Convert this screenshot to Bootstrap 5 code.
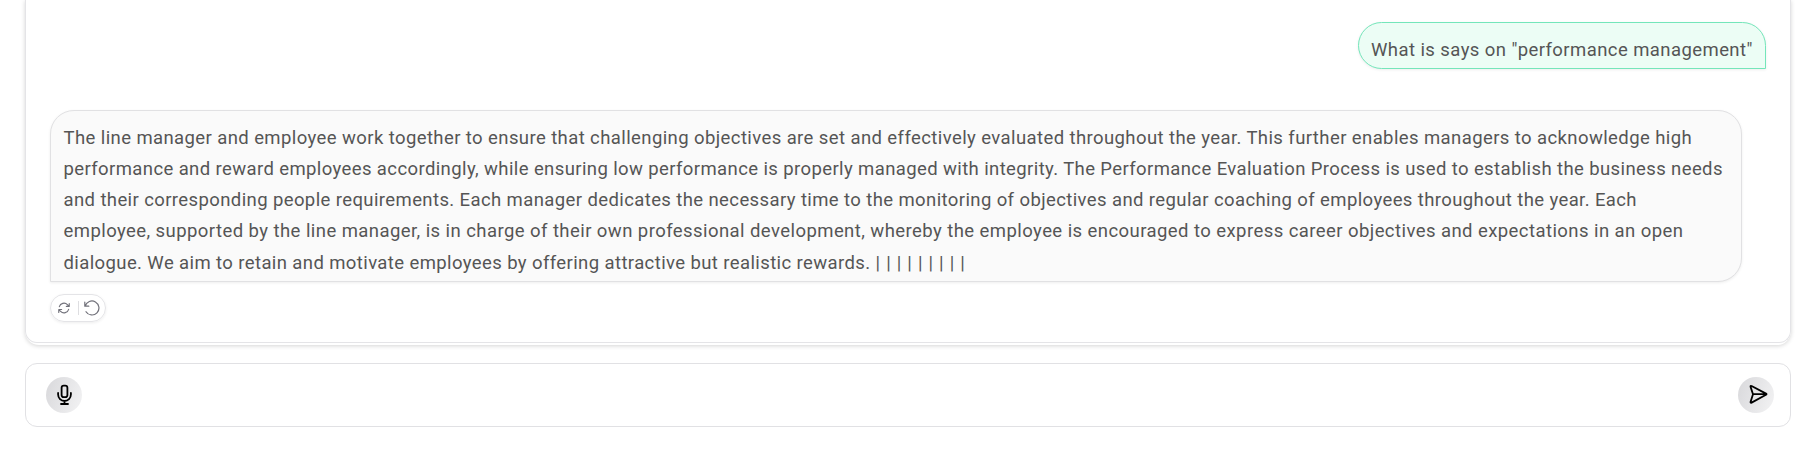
<!DOCTYPE html>
<html lang="en">
<head>
<meta charset="utf-8">
<meta name="viewport" content="width=device-width, initial-scale=1">
<title>Chat</title>
<link href="https://cdn.jsdelivr.net/npm/bootstrap@5.3.0/dist/css/bootstrap.min.css" rel="stylesheet">
<style>
body{font-family:Roboto,"Liberation Sans",sans-serif;color:#555;background:#fff;height:464px;overflow:hidden}
.shell{padding:0 17px 0 25px}
.chat-panel{height:345px;padding-bottom:2px;border-radius:0 0 14px 14px;box-shadow:0 1px 4px rgba(0,0,0,.17)}
.chat-scroll{height:343px;border:1px solid #e4e4e7;border-top:0;border-radius:0 0 12px 12px;padding:22px 24px 0}
.bubble{border:1px solid #e1e1e3;background:#fafafa;font-size:18.5px;line-height:31.25px;box-shadow:0 1px 3px rgba(0,0,0,.07);white-space:nowrap}
.bubble-user{width:408px;height:47px;border-color:#74e6ba;background:#ecfdf5;border-radius:24px 24px 0 24px;padding:11.5px 12px 0;letter-spacing:.425px}
.bubble-bot{width:1692px;height:172px;border-radius:24px 24px 24px 0;padding:11.5px 12.5px 0;margin-top:41px}
.line-a{letter-spacing:.404px}
.line-b{letter-spacing:.391px}
.line-c{letter-spacing:.395px}
.line-d{letter-spacing:.43px}
.line-e{letter-spacing:.396px}
.cursor-run{letter-spacing:.74px}
.tools{width:56px;height:28px;margin-top:12px;border:1px solid #e4e4e7;border-radius:14px;box-shadow:0 1px 3px rgba(0,0,0,.07);color:#71717a;padding:0 5px 0 6px}
.tool-btn{border:0;background:none;padding:0;color:inherit;line-height:0}
.tool-rule{width:1px;height:14px;background:#dedee1;margin-left:1px}
.composer{height:64px;margin-top:18px;border:1px solid #e1e1e4;border-radius:12px;padding:0 16px 0 20px}
.composer input{border:0;outline:0;background:none}
.round-btn{width:36px;height:36px;border:0;padding:0;border-radius:50%;background:linear-gradient(110deg,#d8d8db,#f3f3f4);color:#000}
svg{fill:none;stroke:currentColor;stroke-linecap:round;stroke-linejoin:round}
</style>
</head>
<body>
<main class="shell d-flex flex-column">
<section class="chat-panel"><div class="chat-scroll">
<div class="d-flex justify-content-end"><div class="bubble bubble-user">What is says on "performance management"</div></div>
<div class="bubble bubble-bot">
<span class="line-a">The line manager and employee work together to ensure that challenging objectives are set and effectively evaluated throughout the year. This further enables managers to acknowledge high</span><br>
<span class="line-b">performance and reward employees accordingly, while ensuring low performance is properly managed with integrity. The Performance Evaluation Process is used to establish the business needs</span><br>
<span class="line-c">and their corresponding people requirements. Each manager dedicates the necessary time to the monitoring of objectives and regular coaching of employees throughout the year. Each</span><br>
<span class="line-d">employee, supported by the line manager, is in charge of their own professional development, whereby the employee is encouraged to express career objectives and expectations in an open</span><br>
<span class="line-e">dialogue. We aim to retain and motivate employees by offering attractive but realistic rewards. </span><span class="cursor-run">| | | | | | | | |</span>
</div>
<div class="tools d-flex align-items-center justify-content-between">
<button class="tool-btn" aria-label="Regenerate"><svg width="14" height="14" viewBox="0 0 24 24" stroke-width="1.9"><path d="M16 9.3h5V4.4M3 19.6v-5h5M3 14.7l3.2 3.2a8.3 8.3 0 0 0 13.8-3.7M4 9.8a8.3 8.3 0 0 1 13.8-3.7L21 9.3"/></svg></button>
<span class="tool-rule"></span>
<button class="tool-btn" aria-label="Restart"><svg width="16" height="16" viewBox="0 0 16 16" stroke-width="1.2"><path d="M.8 2.2v4h4M1.2 6.1A7 7 0 1 1 2 11.7"/></svg></button>
</div>
</div></section>
<form class="composer d-flex align-items-center">
<button type="button" class="round-btn d-flex align-items-center justify-content-center" aria-label="Record"><svg width="24" height="24" viewBox="0 0 24 24" stroke-width="1.8"><rect x="9.6" y="2.6" width="5.8" height="11.6" rx="2.2"/><path d="M6.1 10v1.6a6.4 6.4 0 0 0 12.8 0V10M12.5 18v2.9M9 21h7"/></svg></button>
<input class="flex-grow-1" aria-label="Message">
<button type="button" class="round-btn d-flex align-items-center justify-content-center" aria-label="Send"><svg width="24" height="24" viewBox="0 0 24 24" stroke-width="1.8"><path d="M9 11.2 6.6 3.9Q6.2 2.4 7.6 3L22 10.6Q23 11.2 22 11.8L7.6 19.6Q6.2 20.2 6.6 18.7ZM9 11.2H22"/></svg></button>
</form>
</main>
<script src="https://cdn.jsdelivr.net/npm/bootstrap@5.3.0/dist/js/bootstrap.bundle.min.js"></script>
</body>
</html>
